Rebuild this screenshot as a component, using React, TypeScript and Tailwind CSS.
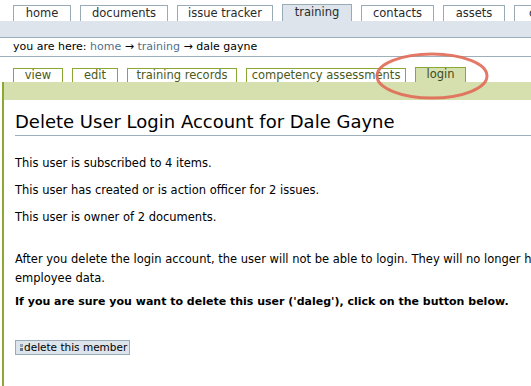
const TOP_TABS = [
  { label: 'home', w: 'w-[58px]' },
  { label: 'documents', w: 'w-[88px]' },
  { label: 'issue tracker', w: 'w-[96px]' },
  { label: 'training', w: 'w-[70px]', active: true },
  { label: 'contacts', w: 'w-[73px]' },
  { label: 'assets', w: 'w-[62px]' },
  { label: 'calendar', w: 'w-[80px]' },
]

const SUB_TABS = [
  { label: 'view', w: 'w-[50px]' },
  { label: 'edit', w: 'w-[46px]' },
  { label: 'training records', w: 'w-[110px]' },
  { label: 'competency assessments', w: 'w-[160px]' },
  { label: 'login', w: 'w-[51px]', active: true },
]

export default function App() {
  return (
    <div className="relative w-[531px] h-[386px] overflow-hidden bg-white text-black font-['DejaVu_Sans',sans-serif]">
      {/* main nav */}
      <div className="flex gap-[9px] pl-[13px] pt-[5px] h-[21px] items-end whitespace-nowrap">
        {TOP_TABS.map(({ label, w, active }) => (
          <div
            key={label}
            className={`${w} shrink-0 h-[16px] border border-b-0 border-[#9aabb8] text-center text-[11.5px] leading-[15px] text-[#2a2a2a] ${active ? 'bg-[#dde4eb] h-[17px]' : 'bg-white'}`}
          >
            {label}
          </div>
        ))}
      </div>
      <div className="h-[17px] bg-[#dde4eb] border-b border-[#9eafbc]" />

      {/* breadcrumb */}
      <div className="h-[19px] border-b border-[#9eafbc] pl-[13px] text-[11px] leading-[18px]">
        you are here: <span className="text-[#4f6e8c]">home</span> → <span className="text-[#4f6e8c]">training</span> → dale gayne
      </div>

      {/* sub nav */}
      <div className="flex gap-[9px] pl-[13px] pt-[10px] items-end whitespace-nowrap">
        {SUB_TABS.map(({ label, w, active }) => (
          <div
            key={label}
            className={`${w} shrink-0 h-[14px] border border-b-0 border-[#8aa934] text-center text-[11.5px] leading-[13px] ${active ? 'bg-[#d5e0ae] text-[#3f4a1c] h-[15px]' : 'bg-white text-[#4b5a20]'}`}
          >
            {label}
          </div>
        ))}
      </div>

      <div className="ml-[2px] border-l-2 border-[#8aa934]">
        <div className="h-[18px] bg-[#d5e0ae]" />
        <div className="pl-[11px] pt-[10px] text-[11.5px]">
          <h1 className="text-[18px] leading-[24px] border-b border-[#9eafbc] pb-[1px] whitespace-nowrap">
            Delete User Login Account for Dale Gayne
          </h1>
          <p className="mt-[20px] leading-[15px]">This user is subscribed to 4 items.</p>
          <p className="mt-[12px] leading-[15px]">This user has created or is action officer for 2 issues.</p>
          <p className="mt-[12px] leading-[15px]">This user is owner of 2 documents.</p>
          <p className="mt-[25px] leading-[19px] w-[640px]">
            After you delete the login account, the user will not be able to login. They will no longer have access to employee data.
          </p>
          <p className="mt-[6px] leading-[15px] text-[11px] font-bold whitespace-nowrap">
            If you are sure you want to delete this user ('daleg'), click on the button below.
          </p>
          <button className="mt-[31px] flex items-center h-[15px] pl-[4px] pr-[2px] bg-[#dde4eb] border border-[#9aabb8] text-[10.5px] leading-[13px]">
            <span className="flex flex-col gap-[1px] mr-[1px]">
              <span className="w-[3px] h-[3px] bg-[#8da0b0]" />
              <span className="w-[3px] h-[3px] bg-[#5f7488]" />
            </span>
            delete this member
          </button>
          <div className="h-[40px]" />
        </div>
      </div>

      {/* annotation */}
      <svg className="absolute left-[372px] top-[49px]" width="124" height="54" viewBox="0 0 124 54">
        <ellipse cx="60" cy="27" rx="55" ry="22" fill="none" stroke="#e26a57" strokeWidth="3" opacity="0.9" />
      </svg>
    </div>
  )
}
